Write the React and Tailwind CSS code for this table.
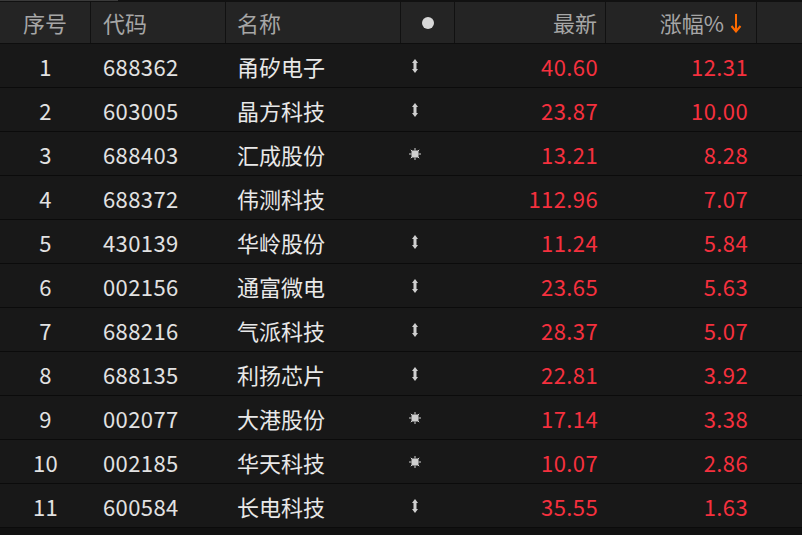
import React from 'react';

const rows = [
    { no: 1, code: '688362', name: '甬矽电子', icon: 'arrow', price: '40.60', pct: '12.31' },
    { no: 2, code: '603005', name: '晶方科技', icon: 'arrow', price: '23.87', pct: '10.00' },
    { no: 3, code: '688403', name: '汇成股份', icon: 'sun', price: '13.21', pct: '8.28' },
    { no: 4, code: '688372', name: '伟测科技', icon: null, price: '112.96', pct: '7.07' },
    { no: 5, code: '430139', name: '华岭股份', icon: 'arrow', price: '11.24', pct: '5.84' },
    { no: 6, code: '002156', name: '通富微电', icon: 'arrow', price: '23.65', pct: '5.63' },
    { no: 7, code: '688216', name: '气派科技', icon: 'arrow', price: '28.37', pct: '5.07' },
    { no: 8, code: '688135', name: '利扬芯片', icon: 'arrow', price: '22.81', pct: '3.92' },
    { no: 9, code: '002077', name: '大港股份', icon: 'sun', price: '17.14', pct: '3.38' },
    { no: 10, code: '002185', name: '华天科技', icon: 'sun', price: '10.07', pct: '2.86' },
    { no: 11, code: '600584', name: '长电科技', icon: 'arrow', price: '35.55', pct: '1.63' },
];

const cols = 'grid grid-cols-[91px_135px_175px_54px_151px_151px_45px]';

function UpDown() {
    return (
        <svg width="8" height="14" viewBox="0 0 8 14" className="text-[#cfcfcf]">
            <path d="M4 0 L7 4 L5.5 4 L5.5 10 L7 10 L4 14 L1 10 L2.5 10 L2.5 4 L1 4 Z" fill="currentColor" />
        </svg>
    );
}

function Sun() {
    return (
        <svg width="14" height="14" viewBox="0 0 14 14" className="text-[#cfcfcf]">
            <rect x="3.5" y="3.5" width="7" height="7" fill="currentColor" />
            <path d="M7 1V3.5M7 10.5V13M1 7H3.5M10.5 7H13M2.8 2.8L4 4M10 10L11.2 11.2M11.2 2.8L10 4M4 10L2.8 11.2" stroke="currentColor" strokeWidth="1" />
        </svg>
    );
}

export default function App() {
    return (
        <div className="w-[802px] h-[535px] overflow-hidden bg-[#111111] font-['Noto_Sans_CJK_SC','Microsoft_YaHei',sans-serif]">
            <div className="flex h-[2px]">
                <div className="w-[118px] h-[1px] bg-[#3a3a3a]" />
            </div>

            <div className={`${cols} h-[42px] bg-[#242424] text-[#a6a6a6] text-[22px] border-b border-[#0e0e0e]`}>
                <div className="flex items-center justify-center border-r border-[#111111]">序号</div>
                <div className="flex items-center pl-[12px] border-r border-[#111111]">代码</div>
                <div className="flex items-center pl-[11px] border-r border-[#111111]">名称</div>
                <div className="flex items-center justify-center border-r border-[#111111]">
                    <span className="w-[12px] h-[12px] rounded-full bg-[#d8d8d8]" />
                </div>
                <div className="flex items-center justify-end pr-[8px] border-r border-[#111111]">最新</div>
                <div className="flex items-center justify-end pr-[14px] border-r border-[#111111]">
                    涨幅%
                    <svg width="12" height="20" viewBox="0 0 12 20" className="ml-[6px]">
                        <path d="M6 1V18M1.5 13L6 18.5L10.5 13" stroke="#ff6a00" strokeWidth="2" fill="none" />
                    </svg>
                </div>
                <div />
            </div>

            {rows.map(r => (
                <div key={r.no} className={`${cols} h-[44px] bg-[#181818] border-b border-[#0b0b0b] text-[22px] leading-none`}>
                    <div className="flex items-center justify-center pt-[1px] tracking-[0.4px] text-[#e2e2e2]">{r.no}</div>
                    <div className="flex items-center pl-[12px] pt-[1px] tracking-[0.4px] text-[#e2e2e2]">{r.code}</div>
                    <div className="flex items-center pl-[11px] pt-[1px] text-[#e8e8e8]">{r.name}</div>
                    <div className="flex items-center pl-[9px]">
                        {r.icon === 'arrow' && <span className="ml-[1px]"><UpDown /></span>}
                        {r.icon === 'sun' && <span className="-ml-[2px]"><Sun /></span>}
                    </div>
                    <div className="flex items-center justify-end pr-[8px] pt-[1px] tracking-[0.4px] text-[#f5303e]">{r.price}</div>
                    <div className="flex items-center justify-end pr-[9px] pt-[1px] tracking-[0.4px] text-[#f5303e]">{r.pct}</div>
                    <div />
                </div>
            ))}
        </div>
    );
}
